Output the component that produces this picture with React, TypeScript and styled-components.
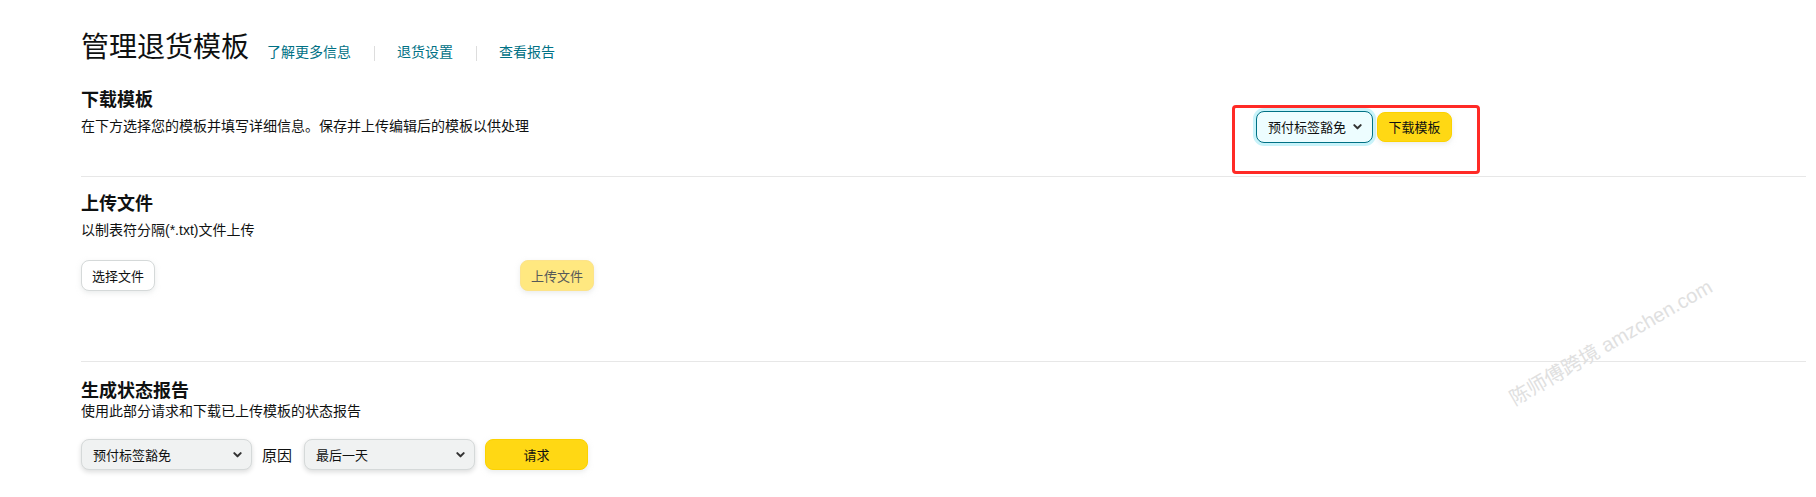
import React from 'react';
import styled, { createGlobalStyle } from 'styled-components';

const GlobalStyle = createGlobalStyle`
	body {
		margin: 0;
		background: #fff;
		color: #0f1111;
		font-family: "Liberation Sans", "Noto Sans CJK SC", Arial, sans-serif;
	}
`;

const Chevron = () => (
	<svg width="11" height="11" viewBox="0 0 12 12" fill="none">
		<path d="M2.5 4.5 L6 8 L9.5 4.5" stroke="#333" strokeWidth="2.2" strokeLinecap="round" strokeLinejoin="round" />
	</svg>
);

export default function App() {
	return (
		<Page>
			<GlobalStyle />
			<Header>
				<Title>管理退货模板</Title>
				<NavLink>了解更多信息</NavLink>
				<NavSep />
				<NavLink>退货设置</NavLink>
				<NavSep />
				<NavLink>查看报告</NavLink>
			</Header>

			<Section $pad={2}>
				<TopRow>
					<TextBlock>
						<Heading>下载模板</Heading>
						<Desc $gap={4}>在下方选择您的模板并填写详细信息。保存并上传编辑后的模板以供处理</Desc>
					</TextBlock>
					<Highlight>
						<SelectBox $focus $width={117} $height={32}>
							<span>预付标签豁免</span>
							<Chevron />
						</SelectBox>
						<YellowButton $width={75} $height={30}>下载模板</YellowButton>
					</Highlight>
				</TopRow>
			</Section>

			<Section $top={15} $pad={70}>
				<Heading>上传文件</Heading>
				<Desc $gap={4}>以制表符分隔(*.txt)文件上传</Desc>
				<UploadRow>
					<FileInput>
						<WhiteButton>选择文件</WhiteButton>
					</FileInput>
					<DisabledButton>上传文件</DisabledButton>
				</UploadRow>
			</Section>

			<Section $top={17} $pad={30} $last>
				<Heading>生成状态报告</Heading>
				<Desc $gap={-2}>使用此部分请求和下载已上传模板的状态报告</Desc>
				<ReportRow>
					<SelectBox $width={171} $height={31}>
						<span>预付标签豁免</span>
						<Chevron />
					</SelectBox>
					<Label>原因</Label>
					<SelectBox $width={171} $height={31}>
						<span>最后一天</span>
						<Chevron />
					</SelectBox>
					<YellowButton $width={103} $height={31}>请求</YellowButton>
				</ReportRow>
			</Section>

			<Watermark>陈师傅跨境 amzchen.com</Watermark>
		</Page>
	);
}

const Page = styled.div`
	position: relative;
	width: 1816px;
	height: 497px;
	box-sizing: border-box;
	padding: 30px 10px 0 81px;
	overflow: hidden;
`;

const Header = styled.div`
	display: flex;
	align-items: baseline;
	height: 40px;
`;

const Title = styled.h1`
	margin: 0 18px 0 0;
	font-size: 28px;
	font-weight: 400;
	line-height: 36px;
`;

const NavLink = styled.a`
	font-size: 14px;
	line-height: 20px;
	color: #007185;
	cursor: pointer;
`;

const NavSep = styled.span`
	display: inline-block;
	width: 1px;
	height: 15px;
	margin: 0 22px 0 23px;
	background: #ddd;
	align-self: center;
	transform: translateY(3px);
`;

const Section = styled.section<{ $top?: number; $pad: number; $last?: boolean }>`
	padding-top: ${(p) => p.$top ?? 18}px;
	padding-bottom: ${(p) => p.$pad}px;
	border-bottom: ${(p) => (p.$last ? 'none' : '1px solid #e7e7e7')};
`;

const TopRow = styled.div`
	display: flex;
	align-items: flex-start;
`;

const TextBlock = styled.div`
	width: 1151px;
`;

const Heading = styled.h3`
	margin: 0;
	font-size: 18px;
	font-weight: 700;
	line-height: 24px;
`;

const Desc = styled.p<{ $gap: number }>`
	margin: ${(p) => p.$gap}px 0 0;
	font-size: 14px;
	line-height: 20px;
`;

const Highlight = styled.div`
	display: flex;
	align-items: center;
	gap: 4px;
	width: 248px;
	height: 69px;
	box-sizing: border-box;
	margin-top: 17px;
	padding: 0 0 26px 21px;
	border: 3px solid #ff2a26;
	border-radius: 4px;
`;

const SelectBox = styled.div<{ $width: number; $height: number; $focus?: boolean }>`
	display: flex;
	align-items: center;
	justify-content: space-between;
	box-sizing: border-box;
	width: ${(p) => p.$width}px;
	height: ${(p) => p.$height}px;
	padding: 0 ${(p) => (p.$focus ? 9 : 8)}px 0 11px;
	font-size: 13px;
	color: #0f1111;
	border-radius: 8px;
	background: ${(p) => (p.$focus ? '#edfdff' : '#f0f2f2')};
	border: 1px solid ${(p) => (p.$focus ? '#007185' : '#d5d9d9')};
	box-shadow: ${(p) => (p.$focus ? '0 0 0 3px #c8f3fa, 0 1px 2px rgba(15,17,17,.15)' : '0 2px 5px rgba(15,17,17,.15)')};
`;

const YellowButton = styled.button<{ $width: number; $height: number }>`
	width: ${(p) => p.$width}px;
	height: ${(p) => p.$height}px;
	padding: 0;
	font-family: inherit;
	font-size: 13px;
	color: #0f1111;
	background: #ffd814;
	border: 1px solid #fcd200;
	border-radius: 8px;
	box-shadow: 0 2px 5px rgba(213, 217, 217, 0.5);
`;

const UploadRow = styled.div`
	display: flex;
	align-items: center;
	margin-top: 20px;
`;

const FileInput = styled.div`
	width: 439px;
`;

const WhiteButton = styled.button`
	width: 74px;
	height: 31px;
	padding: 0;
	font-family: inherit;
	font-size: 13px;
	color: #0f1111;
	background: #fff;
	border: 1px solid #d5d9d9;
	border-radius: 8px;
	box-shadow: 0 2px 5px rgba(213, 217, 217, 0.5);
`;

const DisabledButton = styled.button`
	width: 74px;
	height: 31px;
	padding: 0;
	font-family: inherit;
	font-size: 13px;
	color: #565959;
	background: #ffe880;
	border: 1px solid #fce38a;
	border-radius: 8px;
	box-shadow: 0 2px 5px rgba(213, 217, 217, 0.5);
`;

const ReportRow = styled.div`
	display: flex;
	align-items: center;
	gap: 10px;
	margin-top: 18px;
`;

const Label = styled.span`
	margin-right: 2px;
	font-size: 15px;
`;

const Watermark = styled.div`
	position: absolute;
	left: 1610px;
	top: 341px;
	transform: translate(-50%, -50%) rotate(-30deg);
	white-space: nowrap;
	font-size: 20px;
	color: #e0e0e0;
	pointer-events: none;
`;
